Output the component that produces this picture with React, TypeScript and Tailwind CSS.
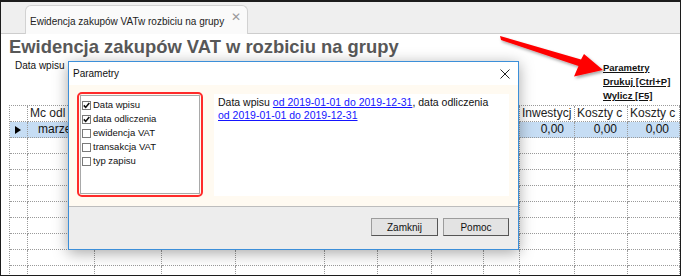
import React from 'react';

// column widths of the grid behind the dialog
const cols = [18, 67, 67, 74, 89, 53, 54, 52, 36, 55, 53, 52];
// only the cells that show around the dialog carry text
const headers = ['', 'Mc odl', '', '', '', '', '', '', '', 'Inwestycj', 'Koszty c', 'Koszty c'];
const dataRow = ['', 'marze', '', '', '', '', '', '', '', '0,00', '0,00', '0,00'];

const gridTemplate = cols.map(w => `${w}px`).join(' ');

const Check: React.FC<{ checked?: boolean; label: string }> = ({ checked, label }) => (
  <div className="flex items-center h-[14px]">
    <span className="w-[9px] h-[9px] border border-[#7a7a7a] bg-white flex items-center justify-center shrink-0">
      {checked && (
        <svg width="7" height="7" viewBox="0 0 7 7">
          <path d="M0.8 3.4 L2.7 5.4 L6.3 1" stroke="#111" strokeWidth="1.6" fill="none" />
        </svg>
      )}
    </span>
    <span className="ml-[2px] text-[9.5px] text-[#111]">{label}</span>
  </div>
);

const Arrow: React.FC = () => (
  <svg className="absolute left-[490px] top-[28px]" width="120" height="56" viewBox="490 28 120 56">
    <defs>
      <filter id="sh" x="-20%" y="-40%" width="140%" height="180%">
        <feDropShadow dx="1.5" dy="2" stdDeviation="1.6" floodColor="#000" floodOpacity="0.35" />
      </filter>
    </defs>
    <polygon
      points="499,34 580,57.5 583,52 602,68 573,74.5 577.5,64 500,38"
      fill="#ff0000"
      filter="url(#sh)"
    />
  </svg>
);

const Dialog: React.FC = () => (
  <div className="absolute left-[67px] top-[59px] w-[451px] h-[189px] border border-[#3c8fd9] bg-white flex flex-col shadow-[0_3px_14px_rgba(0,0,0,0.35)]">
    {/* title bar */}
    <div className="h-[23px] flex items-center justify-between pl-[4px] pr-[8px] bg-white">
      <span className="text-[10px] text-[#111]">Parametry</span>
      <svg width="10" height="10" viewBox="0 0 10 10">
        <path d="M0.5 0.5 L9.5 9.5 M9.5 0.5 L0.5 9.5" stroke="#222" strokeWidth="1" />
      </svg>
    </div>
    {/* content */}
    <div className="h-[121px] bg-[#fffaf1] flex pl-[8px] pt-[7px]">
      <div className="w-[126px] h-[105px] border-2 border-[#ff2b2b] rounded-[5px] p-[1px]">
        <div className="h-full border border-[#a9a9a9] bg-white pl-[1px] pt-[2px]">
          <Check checked label="Data wpisu" />
          <Check checked label="data odliczenia" />
          <Check label="ewidencja VAT" />
          <Check label="transakcja VAT" />
          <Check label="typ zapisu" />
        </div>
      </div>
      <div className="ml-[11px] mt-[2px] w-[295px] h-[102px] bg-white pl-[4px] pt-[2px] text-[10.5px] leading-[13px] text-[#111]">
        Data wpisu <span className="text-[#1515ff] underline">od 2019-01-01 do 2019-12-31</span>, data odliczenia
        <br />
        <span className="text-[#1515ff] underline">od 2019-01-01 do 2019-12-31</span>
      </div>
    </div>
    {/* footer */}
    <div className="flex-1 bg-[#ededed] border-t border-[#bdbdbd] flex justify-end items-start pt-[11px] pr-[9px] gap-[5px]">
      <button className="w-[67px] h-[18px] bg-[#e3e3e3] border border-[#9c9c9c] border-r-[#555] border-b-[#555] text-[10px] text-[#111]">
        Zamknij
      </button>
      <button className="w-[66px] h-[18px] bg-[#e3e3e3] border border-[#9c9c9c] border-r-[#555] border-b-[#555] text-[10px] text-[#111]">
        Pomoc
      </button>
    </div>
  </div>
);

const Grid: React.FC = () => {
  const empty = Array.from({ length: 10 }, (_, i) => i);
  return (
    <div className="ml-[8px] border-t border-l border-dotted border-[#9a9a9a]">
      <div className="grid h-[16px]" style={{ gridTemplateColumns: gridTemplate }}>
        {headers.map((h, i) => (
          <div key={i} className="border-r border-b border-dotted border-[#9a9a9a] overflow-hidden whitespace-nowrap pl-[2px] text-[12px] leading-[15px] text-[#222] bg-white">
            {h}
          </div>
        ))}
      </div>
      <div className="grid h-[16px]" style={{ gridTemplateColumns: gridTemplate }}>
        {dataRow.map((d, i) => (
          <div
            key={i}
            className={`border-r border-b border-dotted border-[#9a9a9a] overflow-hidden whitespace-nowrap text-[12px] leading-[15px] text-[#111] bg-[#c6ddf4] ${i === 1 ? 'pl-[10px]' : 'text-right pr-[10px]'}`}
          >
            {i === 0 ? (
              <svg className="ml-[5px] mt-[4px]" width="6" height="8" viewBox="0 0 6 8">
                <path d="M0 0 L6 4 L0 8 Z" fill="#000" />
              </svg>
            ) : (
              d
            )}
          </div>
        ))}
      </div>
      {empty.map(r => (
        <div key={r} className="grid h-[16px]" style={{ gridTemplateColumns: gridTemplate }}>
          {cols.map((_, i) => (
            <div key={i} className="border-r border-b border-dotted border-[#9a9a9a] bg-white" />
          ))}
        </div>
      ))}
    </div>
  );
};

const App: React.FC = () => {
  return (
    <div className="w-[682px] h-[277px] bg-white overflow-hidden" style={{ fontFamily: '"Liberation Sans", Arial, sans-serif' }}>
      <div className="relative w-[681px] h-[276px] border-l border-t-2 border-r border-b border-[#1c1c1c] overflow-hidden flex flex-col">
        {/* tab strip */}
        <div className="h-[32px] bg-[#efefef] border-b border-[#cdcdcd] flex items-end pl-[24px] shrink-0">
          <div className="w-[223px] h-[29px] -mb-px bg-[#fafafa] border border-b-0 border-[#d2d2d2] rounded-t-[6px] flex items-center justify-between pl-[4px] pr-[6px] pb-[1px]">
            <span className="text-[10px] text-[#222] whitespace-nowrap mt-[3px]">Ewidencja zakupów VATw rozbiciu na grupy</span>
            <span className="text-[12px] text-[#9a9a9a] -mt-[6px]">✕</span>
          </div>
        </div>
        {/* header */}
        <div className="pl-[8px] pt-[2px] h-[24px] shrink-0">
          <h1 className="text-[18.4px] leading-[21px] font-bold text-[#585858] whitespace-nowrap">Ewidencja zakupów VAT w rozbiciu na grupy</h1>
        </div>
        <div className="h-[47px] flex justify-between shrink-0">
          <div className="pl-[14px] text-[10px] text-[#111]">Data wpisu</div>
          <div className="w-[77px] pt-[3px] flex flex-col text-[9.5px] leading-[14px] font-bold text-[#111]">
            <span className="underline">Parametry</span>
            <span className="underline">Drukuj [Ctrl+P]</span>
            <span className="underline">Wylicz [F5]</span>
          </div>
        </div>
        <Grid />
        <Arrow />
        <Dialog />
      </div>
    </div>
  );
};

export default App;
